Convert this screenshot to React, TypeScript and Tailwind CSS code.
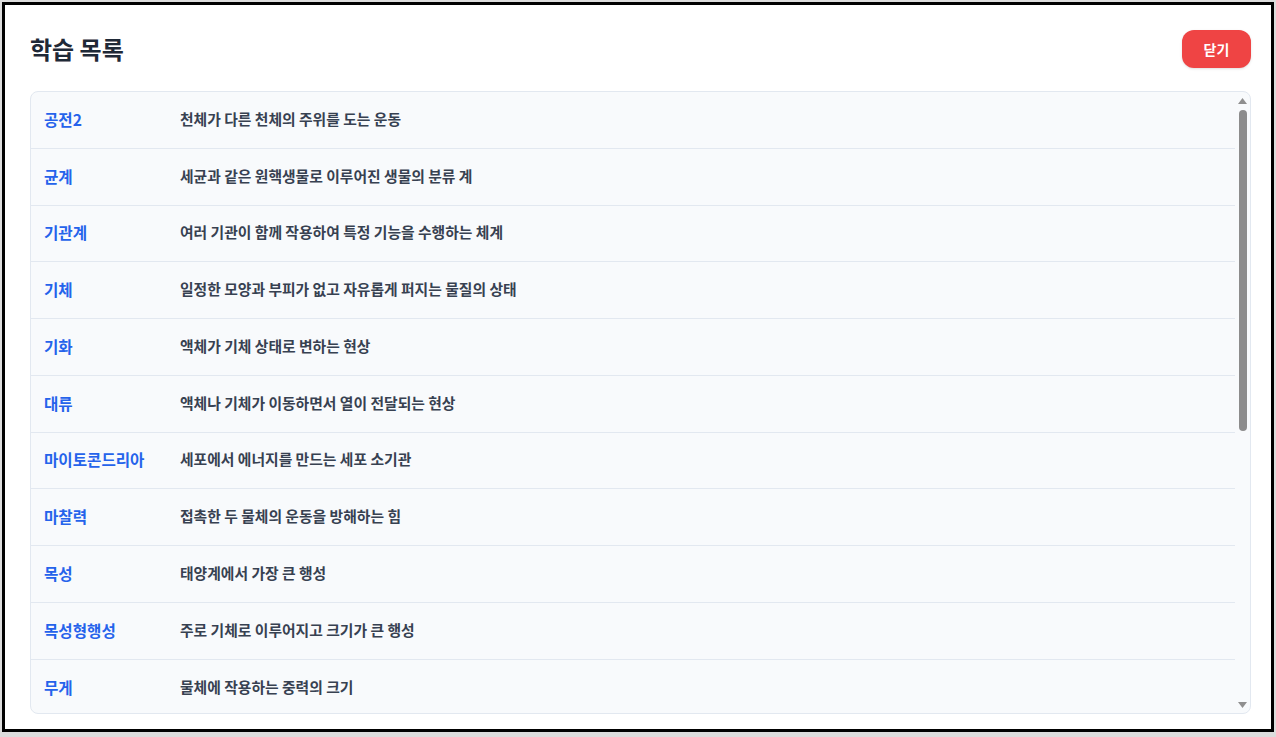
import React from "react";

const items: [string, string][] = [
  ["공전2", "천체가 다른 천체의 주위를 도는 운동"],
  ["균계", "세균과 같은 원핵생물로 이루어진 생물의 분류 계"],
  ["기관계", "여러 기관이 함께 작용하여 특정 기능을 수행하는 체계"],
  ["기체", "일정한 모양과 부피가 없고 자유롭게 퍼지는 물질의 상태"],
  ["기화", "액체가 기체 상태로 변하는 현상"],
  ["대류", "액체나 기체가 이동하면서 열이 전달되는 현상"],
  ["마이토콘드리아", "세포에서 에너지를 만드는 세포 소기관"],
  ["마찰력", "접촉한 두 물체의 운동을 방해하는 힘"],
  ["목성", "태양계에서 가장 큰 행성"],
  ["목성형행성", "주로 기체로 이루어지고 크기가 큰 행성"],
  ["무게", "물체에 작용하는 중력의 크기"],
];

export default function App() {
  return (
    <div
      className="w-full h-[737px] bg-[#dcdcdc] pt-[2px] pl-[2px] pr-[2px] pb-[5px]"
      style={{ fontFamily: '"Noto Sans CJK KR", "Noto Sans", sans-serif' }}
    >
      <div className="h-full border-[3px] border-black bg-white flex flex-col pt-[25px] pl-[25px] pr-[20px] pb-[15px]">
        <div className="flex items-center justify-between h-[38px] shrink-0">
          <h1 className="text-2xl font-bold text-[#1f2937] leading-none">학습 목록</h1>
          <button className="h-[38px] w-[69px] rounded-xl bg-[#ef4444] text-white text-sm font-bold shadow-sm">
            닫기
          </button>
        </div>
        <div className="mt-[23px] flex-1 min-h-0 flex rounded-lg border border-[#e2e8f0] bg-[#f8fafc] overflow-hidden">
          <div className="flex-1 min-w-0 overflow-hidden">
            {items.map(([term, desc], i) => (
              <div
                key={i}
                className="flex items-center h-[56.78px] px-[13px] pb-[2px] border-b border-[#e2e8f0]"
              >
                <div className="w-[136px] shrink-0 text-[15.6px] font-bold text-[#2563eb] leading-6">{term}</div>
                <div className="text-[14.8px] font-semibold text-[#374151] leading-6">{desc}</div>
              </div>
            ))}
          </div>
          <div className="w-[15px] shrink-0 flex flex-col items-center">
            <div className="h-[17px] w-full flex items-center justify-center">
              <svg width="9" height="6" viewBox="0 0 9 6">
                <path d="M4.5 0 L9 6 L0 6 Z" fill="#8f8f8f" />
              </svg>
            </div>
            <div className="mt-[1px] h-[321px] w-[8px] rounded-full bg-[#8c8c8c]" />
            <div className="flex-1" />
            <div className="h-[17px] w-full flex items-center justify-center">
              <svg width="9" height="6" viewBox="0 0 9 6">
                <path d="M0 0 L9 0 L4.5 6 Z" fill="#8f8f8f" />
              </svg>
            </div>
          </div>
        </div>
      </div>
    </div>
  );
}
